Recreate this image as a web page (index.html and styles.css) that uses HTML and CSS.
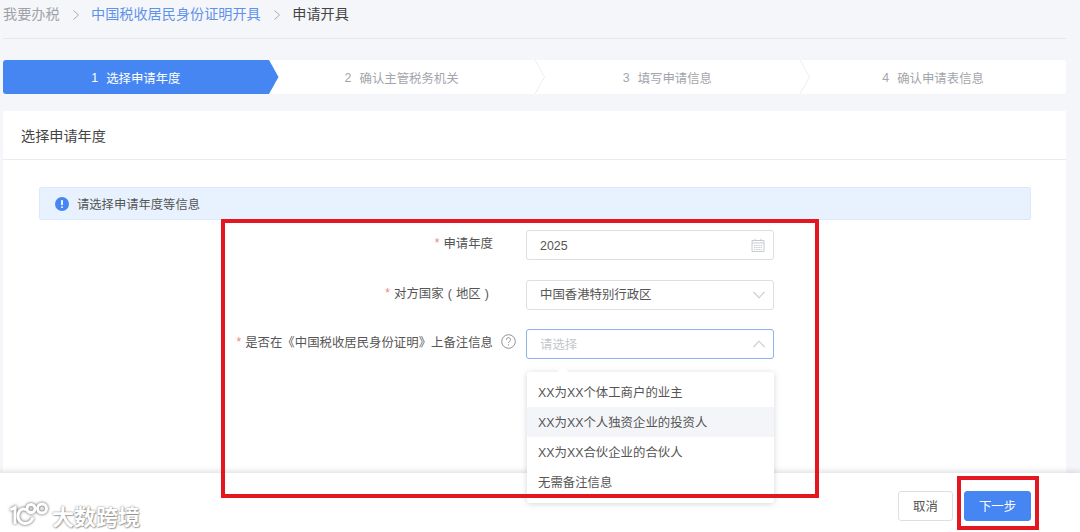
FILE: index.html
```html
<!DOCTYPE html>
<html lang="zh-CN">
<head>
<meta charset="utf-8">
<title>申请开具</title>
<link rel="stylesheet" href="styles.css">
</head>
<body>
<div class="page">
  <main class="main">
    <nav class="crumbs">
      <span class="crumb-muted">我要办税</span>
      <svg class="crumb-sep" viewBox="0 0 8 12"><path d="M1.5 1.5 6.5 6 1.5 10.5"/></svg>
      <span class="crumb-link">中国税收居民身份证明开具</span>
      <svg class="crumb-sep" viewBox="0 0 8 12"><path d="M1.5 1.5 6.5 6 1.5 10.5"/></svg>
      <span class="crumb-current">申请开具</span>
    </nav>
    <ol class="steps">
      <li class="step step-active"><span class="step-num">1</span>选择申请年度
        <svg class="step-tip" viewBox="0 0 10 34" preserveAspectRatio="none"><path d="M0 0 9.5 17 0 34"/></svg></li>
      <li class="step"><span class="step-num">2</span>确认主管税务机关
        <svg class="step-tip" viewBox="0 0 10 34" preserveAspectRatio="none"><path d="M0 0 9.5 17 0 34"/></svg></li>
      <li class="step"><span class="step-num">3</span>填写申请信息
        <svg class="step-tip" viewBox="0 0 10 34" preserveAspectRatio="none"><path d="M0 0 9.5 17 0 34"/></svg></li>
      <li class="step"><span class="step-num">4</span>确认申请表信息</li>
    </ol>
    <section class="card">
      <h2 class="card-title">选择申请年度</h2>
      <div class="alert">
        <svg class="alert-icon" viewBox="0 0 14 14"><circle cx="7" cy="7" r="7"/><rect x="6.1" y="3" width="1.8" height="5.2" rx=".6"/><rect x="6.1" y="9.3" width="1.8" height="1.8" rx=".9"/></svg>
        <span>请选择申请年度等信息</span>
      </div>
      <form class="form">
        <div class="row">
          <label class="label"><span class="req">*</span><span>申请年度</span></label>
          <div class="field">
            <span class="value">2025</span>
            <svg class="cal" viewBox="0 0 14 14"><path d="M1 2.5h12v11H1z"/><path d="M1 5h12M4 .8v2.4M10 .8v2.4"/><path class="cal-dots" d="M3 7.5h8M3 9.5h8M3 11.5h8"/></svg>
          </div>
        </div>
        <div class="row">
          <label class="label"><span class="req">*</span><span>对方国家<span class="paren">(</span>地区<span class="paren">)</span></span></label>
          <div class="field">
            <span class="value">中国香港特别行政区</span>
            <svg class="arrow" viewBox="0 0 14 8"><path d="M1.5 1 7 6.8 12.5 1"/></svg>
          </div>
        </div>
        <div class="row">
          <label class="label"><span class="req">*</span><span>是否在<span class="punct">《</span>中国税收居民身份证明<span class="punct">》</span>上备注信息</span>
            <svg class="help" viewBox="0 0 15 15"><circle cx="7.5" cy="7.5" r="6.8"/><path d="M5.4 5.8c0-1.3 1-2.1 2.1-2.1s2.1.8 2.1 2c0 1.6-2.1 1.6-2.1 3.3"/><path d="M7.5 10.3v1.2"/></svg>
          </label>
          <div class="field field-open">
            <span class="value placeholder">请选择</span>
            <svg class="arrow" viewBox="0 0 14 8"><path d="M1.5 7 7 1.2 12.5 7"/></svg>
            <div class="menu">
              <div class="menu-caret"></div>
              <div class="option">XX为XX个体工商户的业主</div>
              <div class="option option-hover">XX为XX个人独资企业的投资人</div>
              <div class="option">XX为XX合伙企业的合伙人</div>
              <div class="option">无需备注信息</div>
            </div>
          </div>
        </div>
      </form>
    </section>
  </main>
  <footer class="footer">
    <div class="watermark">
      <svg class="wm-logo" viewBox="0 0 41 26"><path d="M1.5 8 6 5.5V22" /><path d="M18 8c-5-2.5-9 .5-9 6 0 6 6 9 11 6.5 2-1 3-2.500 4-5"/><circle cx="22" cy="6.500" r="4"/><circle cx="33" cy="6.500" r="4.500"/></svg>
      <span class="wm-text">大数跨境</span>
    </div>
    <button class="btn" type="button">取消</button>
    <button class="btn btn-primary" type="button">下一步</button>
  </footer>
  <div class="mark mark-form"></div>
  <div class="mark mark-next"></div>
</div>
</body>
</html>
```
FILE: styles.css
```css
* { box-sizing: border-box; }
html, body { margin: 0; padding: 0; }
body {
  width: 1080px;
  height: 532px;
  overflow: hidden;
  background: #f5f6fa;
  font-family: "Liberation Sans", "Noto Sans CJK SC", sans-serif;
  color: #555;
}
.page {
  position: relative;
  height: 532px;
  display: flex;
  flex-direction: column;
}
.main {
  flex: 1;
  min-height: 0;
  padding: 0 14px 0 3px;
}

/* breadcrumb */
.crumbs {
  height: 39px;
  padding-bottom: 9px;
  display: flex;
  align-items: center;
  font-size: 14.15px;
  border-bottom: 1px solid #e4e7ed;
  line-height: 1;
}
.crumb-muted { color: #a0a3a8; }
.crumb-link { color: #5f92ea; }
.crumb-current { color: #444; }
.crumb-sep {
  width: 8px;
  height: 12px;
  margin: 0 11.5px 0 12px;
  fill: none;
  stroke: #a8abb2;
  stroke-width: 1;
}

/* steps */
.steps {
  list-style: none;
  margin: 21px 0 0;
  padding: 0;
  height: 34px;
  display: flex;
  background: #fff;
  border-radius: 3px;
  font-size: 12.4px;
  color: #a3a6ab;
}
.step {
  position: relative;
  flex: 1;
  padding-top: 1px;
  display: flex;
  align-items: center;
  justify-content: center;
}
.step-num { margin-right: 8px; }
.step-active {
  background: #4586f3;
  color: #fff;
  border-radius: 3px 0 0 3px;
}
.step-tip {
  position: absolute;
  top: 0;
  right: -10px;
  width: 10px;
  height: 34px;
  fill: #fff;
  stroke: #eceef2;
  z-index: 1;
}
.step-active .step-tip { fill: #4586f3; stroke: none; }

/* card */
.card {
  margin-top: 17px;
  height: 362px;
  background: #fff;
}
.card-title {
  margin: 0;
  height: 49px;
  padding-left: 18px;
  display: flex;
  align-items: center;
  font-size: 14.15px;
  font-weight: 400;
  color: #444;
  border-bottom: 1px solid #e9ebef;
}
.alert {
  margin: 27px 35px 0 36px;
  height: 33px;
  padding-left: 15px;
  display: flex;
  align-items: center;
  gap: 8px;
  font-size: 12.3px;
  color: #555;
  background: #e8f2fe;
  border: 1px solid #dbe9fb;
  border-radius: 2px;
}
.alert-icon { width: 14px; height: 14px; fill: #4586f3; }
.alert-icon rect { fill: #fff; }

/* form */
.form {
  margin-top: 10px;
  display: flex;
  flex-direction: column;
  gap: 19.5px;
}
.row {
  display: flex;
  align-items: flex-start;
  height: 30px;
}
.label {
  width: 490px;
  display: flex;
  justify-content: flex-end;
  align-items: center;
  height: 26px;
  font-size: 12.4px;
  color: #555;
  white-space: nowrap;
  position: relative;
}
.punct { font-family: "Noto Sans CJK TC", sans-serif; }
.paren { padding: 0 4.1px; }
.req { color: #f4837d; margin-right: 4px; font-size: 12px; }
.help {
  position: absolute;
  left: 498px;
  top: 4.5px;
  width: 15px;
  height: 15px;
  fill: none;
  stroke: #8f9298;
  stroke-width: 1;
}
.field {
  position: relative;
  margin-left: 33px;
  width: 248px;
  height: 30px;
  padding: 0 13px;
  display: flex;
  align-items: center;
  justify-content: space-between;
  background: #fff;
  border: 1px solid #dcdfe5;
  border-radius: 3px;
  font-size: 12.4px;
  color: #555;
}
.field-open { border-color: #8db2ee; }
.value { line-height: 1; padding-top: 2px; }
.placeholder { color: #c4c7cd; }
.cal {
  width: 14px;
  height: 14px;
  margin-right: -5px;
  fill: none;
  stroke: #c6cad2;
  stroke-width: 1;
}
.cal-dots { stroke-dasharray: 1.4 .8; }
.arrow {
  width: 14px;
  height: 8px;
  margin-right: -6px;
  fill: none;
  stroke: #c6cad2;
  stroke-width: 1.1;
}

/* dropdown */
.menu {
  position: absolute;
  left: 0;
  top: 41.5px;
  width: 247px;
  padding: 5px 0 6px;
  background: #fff;
  border-radius: 3px;
  box-shadow: 0 1px 6px rgba(60, 70, 90, .22);
  z-index: 5;
}
.menu-caret {
  position: absolute;
  top: -4px;
  left: 32px;
  width: 8px;
  height: 8px;
  background: #fff;
  transform: rotate(45deg);
}
.option {
  height: 30px;
  padding: 1px 0 0 11px;
  display: flex;
  align-items: center;
  font-size: 12.4px;
  color: #555;
  position: relative;
}
.option-hover { background: #f4f5f9; }

/* footer */
.footer {
  position: relative;
  height: 59px;
  flex: none;
  padding: 0 49px 11px 0;
  display: flex;
  align-items: flex-end;
  justify-content: flex-end;
  gap: 11px;
  background: #fff;
  box-shadow: 0 -2px 5px rgba(120, 125, 135, .22);
  z-index: 1;
}
.btn {
  height: 30px;
  width: 55px;
  padding: 0;
  background: #fff;
  border: 1px solid #dcdfe5;
  border-radius: 3px;
  font: inherit;
  font-size: 12.4px;
  color: #555;
}
.btn-primary {
  width: 67px;
  background: #4586f3;
  border-color: #4586f3;
  color: #fff;
}
.watermark {
  position: absolute;
  left: 9px;
  top: 29px;
  display: flex;
  align-items: center;
  gap: 2px;
}
.wm-logo {
  width: 41px;
  height: 26px;
  fill: none;
  stroke: #fff;
  stroke-width: 3;
  filter: drop-shadow(0 0 1.5px rgba(60, 60, 60, .9));
}
.wm-text {
  font-family: "Noto Sans CJK SC", sans-serif;
  font-size: 22px;
  line-height: 25px;
  font-weight: 700;
  color: #fff;
  text-shadow: 0 0 2px rgba(70, 70, 70, .75), 1px 1px 1px rgba(70, 70, 70, .35);
}

/* red annotation frames drawn over the screenshot */
.mark {
  position: absolute;
  border: 4px solid #e4161f;
  z-index: 10;
  pointer-events: none;
}
.mark-form { left: 221px; top: 219px; width: 598px; height: 279px; }
.mark-next { left: 957px; top: 476px; width: 82px; height: 54px; }
```
